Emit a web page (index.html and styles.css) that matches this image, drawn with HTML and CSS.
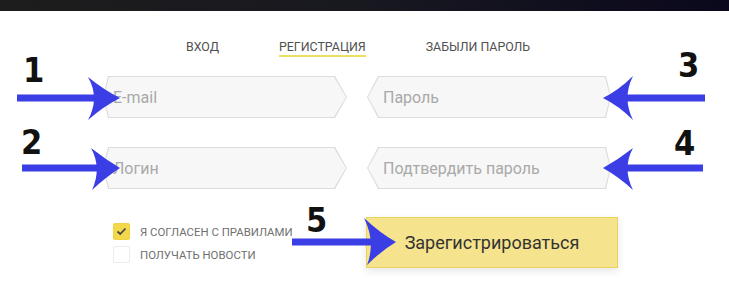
FILE: index.html
```html
<!DOCTYPE html>
<html lang="ru">
<head>
    <meta charset="UTF-8">
    <meta name="viewport" content="width=device-width, initial-scale=1.0">
    <title>Регистрация</title>
    <link rel="stylesheet" href="styles.css">
</head>
<body>

<div class="topbar"></div>

<div class="tabs">
    <span class="tab">ВХОД</span>
    <span class="tab active">РЕГИСТРАЦИЯ</span>
    <span class="tab">ЗАБЫЛИ ПАРОЛЬ</span>
</div>

<form class="reg-form">
    <div class="fields">
        <div class="field field-left"><input type="email" placeholder="E-mail"></div>
        <div class="field field-right"><input type="password" placeholder="Пароль"></div>
        <div class="field field-left"><input type="text" placeholder="Логин"></div>
        <div class="field field-right"><input type="password" placeholder="Подтвердить пароль"></div>
    </div>

    <div class="bottom">
        <div class="checks">
            <label class="check-row">
                <span class="box checked">
                    <svg width="11" height="9" viewBox="0 0 11 9"><path d="M1.5 4.5 L4.2 7 L9.5 1.5" fill="none" stroke="#4a4a4a" stroke-width="1.8"/></svg>
                </span>
                Я СОГЛАСЕН С ПРАВИЛАМИ
            </label>
            <label class="check-row">
                <span class="box"></span>
                ПОЛУЧАТЬ НОВОСТИ
            </label>
        </div>
        <button type="button" class="submit">Зарегистрироваться</button>
    </div>
</form>

<!-- стрелки и номера поверх формы -->
<svg class="notes" width="729" height="308" viewBox="0 0 729 308">
    <g fill="#3a3ee4">
        <rect x="17" y="94.5" width="85" height="7"/>
        <path d="M120 98 Q104 90 88 77 Q100 98 88 120 Q104 106 120 98 Z"/>
        <rect x="22" y="164.5" width="80" height="7"/>
        <path d="M120 168 Q105 159 91 148 Q102 168 92 190 Q106 177 120 168 Z"/>
        <rect x="620" y="94.5" width="85" height="7"/>
        <path d="M603 98 Q619 90 633 76 Q622 98 633 120 Q619 106 603 98 Z"/>
        <rect x="620" y="164.5" width="83" height="7"/>
        <path d="M603 168 Q619 159 633 148 Q622 168 633 190 Q619 177 603 168 Z"/>
        <rect x="292" y="238.5" width="90" height="7"/>
        <path d="M396 242 Q380 233 364 218 Q376 242 367 265 Q381 251 396 242 Z"/>
    </g>
    <g class="num">
        <text x="23" y="82">1</text>
        <text x="21" y="154">2</text>
        <text x="678" y="77">3</text>
        <text x="674" y="155">4</text>
        <text x="306" y="232">5</text>
    </g>
</svg>

</body>
</html>
```

FILE: styles.css
```css
body {
    margin: 0;
    background-color: #fff;
    font-family: Roboto, "Liberation Sans", sans-serif;
    position: relative;
    width: 729px;
    height: 308px;
    overflow: hidden;
}
.topbar {
    height: 11px;
    background: linear-gradient(to right, #1d1d1d, #181820 50%, #0a081c);
}
.tabs {
    display: flex;
    gap: 60px;
    padding-left: 186px;
    margin-top: 29px;
}
.tab {
    font-size: 12.4px;
    line-height: 14px;
    color: #505050;
    padding-bottom: 1px;
    border-bottom: 2px solid transparent;
}
.tab.active {
    border-bottom-color: #ece15c; /* жёлтое подчёркивание */
}
.fields {
    display: grid;
    grid-template-columns: 244px 244px;
    column-gap: 20px;
    row-gap: 29px;
    margin: 19px 0 0 103px;
}
.field {
    height: 42px;
    padding: 1px;
    box-sizing: border-box;
    background-color: #dcdcdc; /* цвет обводки */
}
.field input {
    width: 100%;
    height: 100%;
    box-sizing: border-box;
    border: none;
    outline: none;
    background-color: #f7f7f7;
    font-family: Roboto, sans-serif;
    font-size: 16px;
    color: #333;
    padding: 0 0 0 9px;
}
.field input::placeholder {
    color: #a9a9a9;
}
.field-left, .field-left input {
    clip-path: polygon(5px 0, calc(100% - 12px) 0, 100% 50%, calc(100% - 12px) 100%, 5px 100%, 0 50%);
}
.field-right, .field-right input {
    clip-path: polygon(11px 0, calc(100% - 5px) 0, 100% 50%, calc(100% - 5px) 100%, 11px 100%, 0 50%);
}
.field-right input {
    padding-left: 15px;
}
.bottom {
    display: flex;
    margin-top: 28px;
    padding-left: 113px;
}
.checks {
    width: 253px;
    padding-top: 6px;
    display: flex;
    flex-direction: column;
    gap: 6px;
}
.check-row {
    display: flex;
    align-items: center;
    gap: 10px;
    height: 17px;
    font-size: 11.4px;
    color: #707070;
}
.box {
    width: 17px;
    height: 17px;
    box-sizing: border-box;
    border: 1px solid #ececec;
    border-radius: 2px;
    background-color: #fff;
    display: flex;
    align-items: center;
    justify-content: center;
}
.box.checked {
    background-color: #f3d84b;
    border-color: #f0d343;
}
.submit {
    width: 252px;
    height: 51px;
    background-color: #f6e38d;
    border: 1px solid #ebd35b;
    box-shadow: 0 3px 8px rgba(0, 0, 0, 0.1);
    font-family: Roboto, sans-serif;
    font-size: 18px;
    color: #333;
    cursor: pointer;
}
.notes {
    position: absolute;
    top: 0;
    left: 0;
    pointer-events: none;
}
.num text {
    font-family: "DejaVu Sans Condensed", "DejaVu Sans", sans-serif;
    font-weight: bold;
    font-size: 34px;
    fill: #111;
}
```
